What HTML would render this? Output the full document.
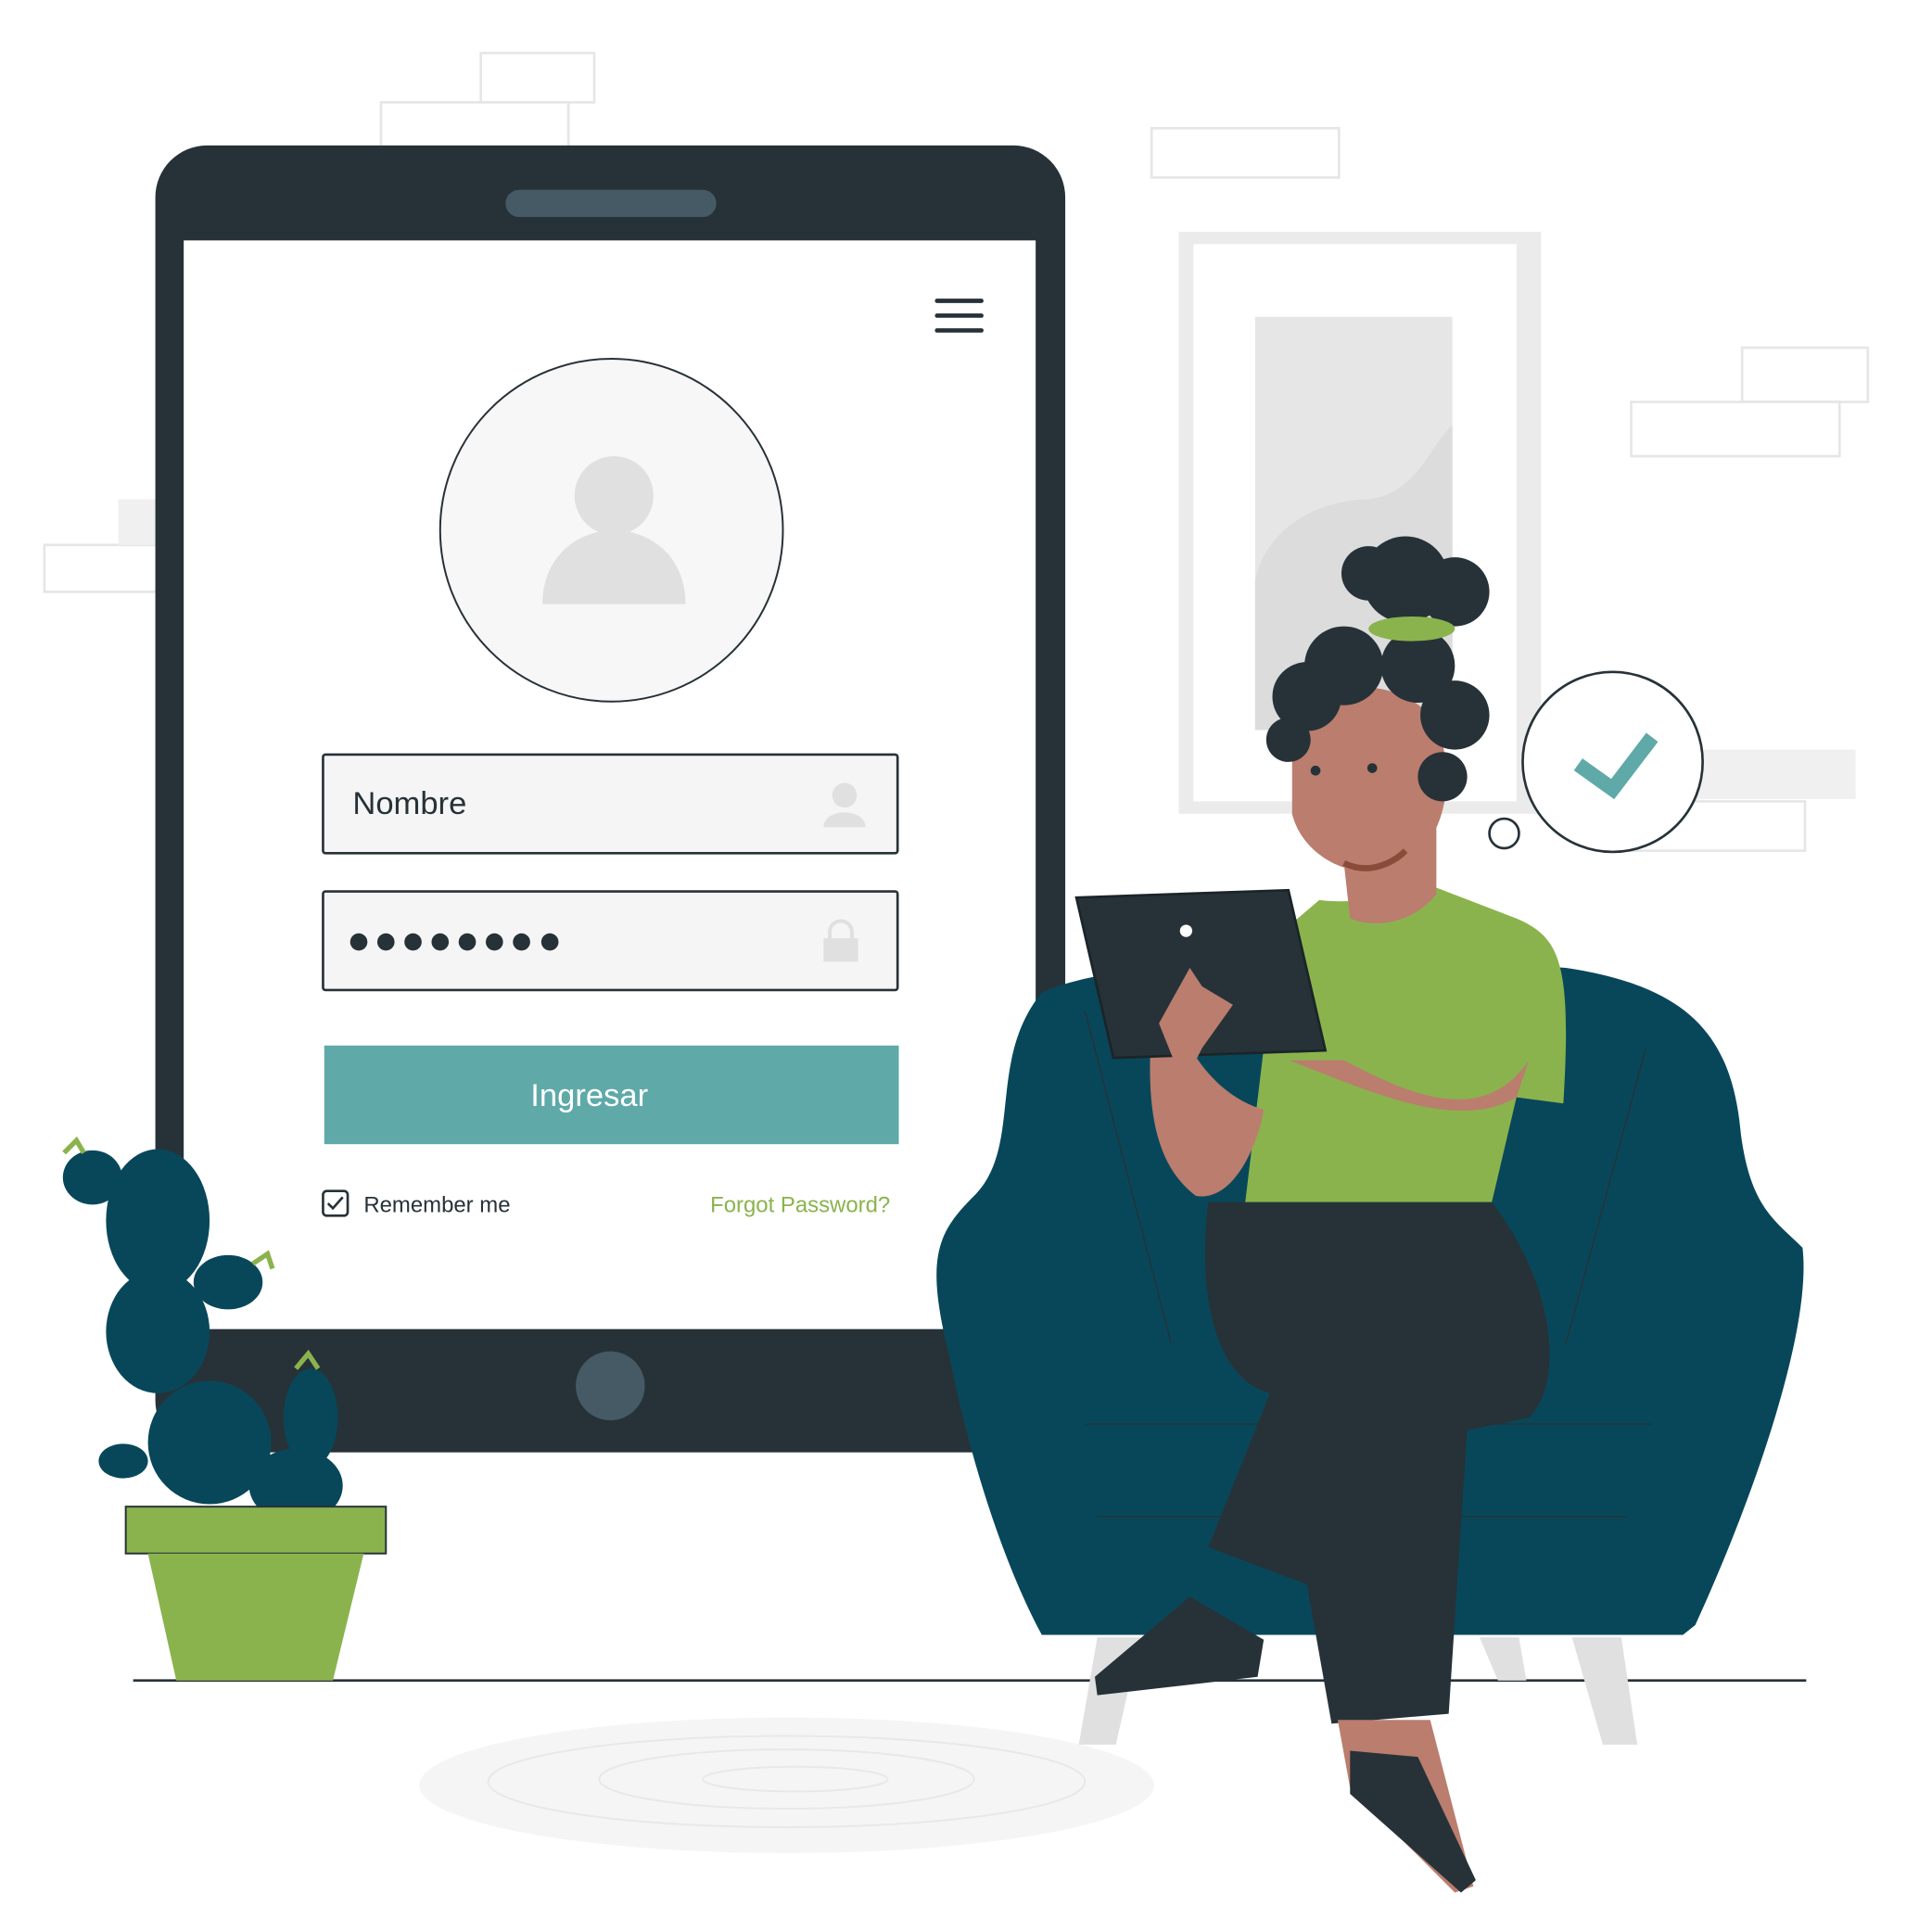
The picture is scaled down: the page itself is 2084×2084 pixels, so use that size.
<!DOCTYPE html>
<html><head><meta charset="utf-8"><style>
html,body{margin:0;padding:0;background:#fff;}
svg{display:block;}
text{font-family:"Liberation Sans",sans-serif;}
</style></head><body>
<svg width="2084" height="2084" viewBox="0 0 1567 1567" xmlns="http://www.w3.org/2000/svg">
<rect width="1567" height="1567" fill="#fff"/>
<g fill="#fff" stroke="#e6e6e6" stroke-width="2">
<rect x="390" y="43" width="92" height="40"/>
<rect x="309" y="83" width="152" height="40"/>
<rect x="934" y="104" width="152" height="40"/>
<rect x="1413" y="282" width="102" height="44"/>
<rect x="1323" y="326" width="169" height="44"/>
<rect x="36" y="442" width="95" height="38"/>
<rect x="1310" y="650" width="154" height="40"/>
</g>
<rect x="96" y="405" width="35" height="37" fill="#f0f0f0"/>
<rect x="1360" y="608" width="145" height="40" fill="#f0f0f0"/>
<rect x="956" y="188" width="294" height="472" fill="#ebebeb"/>
<rect x="968" y="198" width="262" height="452" fill="#fff"/>
<rect x="1018" y="257" width="160" height="335" fill="#e6e6e6"/>
<path d="M1018 470 C1030 420 1080 405 1110 405 C1150 400 1160 360 1178 345 L1178 592 L1018 592Z" fill="#dcdcdc"/>
<ellipse cx="638" cy="1448" rx="298" ry="55" fill="#f5f5f5"/>
<g fill="none" stroke="#e8e8e8" stroke-width="1.5">
<ellipse cx="638" cy="1445" rx="242" ry="37"/>
<ellipse cx="638" cy="1443" rx="152" ry="24"/>
<ellipse cx="645" cy="1443" rx="75" ry="10"/>
</g>
<line x1="108" y1="1363" x2="1465" y2="1363" stroke="#263238" stroke-width="2"/>
<rect x="126" y="118" width="738" height="1060" rx="42" fill="#263238"/>
<rect x="149" y="195" width="691" height="883" fill="#fff"/>
<rect x="410" y="154" width="171" height="22" rx="11" fill="#455a64"/>
<circle cx="495" cy="1124" r="28" fill="#455a64"/>
<g stroke="#263238" stroke-width="3.5" stroke-linecap="round">
<line x1="760" y1="244" x2="796" y2="244"/><line x1="760" y1="256" x2="796" y2="256"/><line x1="760" y1="268" x2="796" y2="268"/>
</g>
<circle cx="496" cy="430" r="139" fill="#f7f7f7" stroke="#263238" stroke-width="1.5"/>
<circle cx="498" cy="402" r="32" fill="#e0e0e0"/>
<path d="M440 490 C440 450 470 430 498 430 C526 430 556 450 556 490Z" fill="#e0e0e0"/>
<rect x="262" y="612" width="466" height="80" rx="2" fill="#f5f5f5" stroke="#263238" stroke-width="2"/>
<text x="286" y="660" font-size="26" fill="#263238">Nombre</text>
<circle cx="685" cy="645" r="10" fill="#e0e0e0"/>
<path d="M668 671 C668 655 702 655 702 671Z" fill="#e0e0e0"/>
<rect x="262" y="723" width="466" height="80" rx="2" fill="#f5f5f5" stroke="#263238" stroke-width="2"/>
<g fill="#263238">
<circle cx="291" cy="764" r="7"/><circle cx="313" cy="764" r="7"/><circle cx="335" cy="764" r="7"/><circle cx="357" cy="764" r="7"/><circle cx="379" cy="764" r="7"/><circle cx="401" cy="764" r="7"/><circle cx="423" cy="764" r="7"/><circle cx="446" cy="764" r="7"/>
</g>
<path d="M673 762 v-6 a9 9 0 0 1 18 0 v6" fill="none" stroke="#e0e0e0" stroke-width="3"/>
<rect x="668" y="761" width="28" height="19" fill="#e0e0e0"/>
<rect x="263" y="848" width="466" height="80" fill="#5fa9a9"/>
<text x="478" y="897" font-size="26" fill="#fff" text-anchor="middle">Ingresar</text>
<rect x="262" y="966" width="20" height="20" rx="3" fill="none" stroke="#263238" stroke-width="2"/>
<path d="M266 976 l4 4 l8 -9" fill="none" stroke="#263238" stroke-width="2"/>
<text x="295" y="983" font-size="18" fill="#263238">Remember me</text>
<text x="722" y="983" font-size="18" fill="#8ab34d" text-anchor="end">Forgot Password?</text>
<path d="M890 1328 L875 1415 L905 1415 L925 1328Z M1275 1328 L1300 1415 L1328 1415 L1315 1328Z M1200 1328 L1215 1363 L1238 1363 L1232 1328Z" fill="#e0e0e0"/>
<path d="M845 805 C900 780 1050 770 1270 785 C1370 800 1405 840 1412 920 C1420 980 1440 990 1462 1012 C1470 1080 1420 1220 1375 1318 L1365 1326 L845 1326 C820 1280 790 1200 770 1100 C750 1020 760 1000 790 970 C830 930 800 860 845 805Z" fill="#08475a"/>
<path d="M890 1230 L1320 1230 M880 1155 L1340 1155 M1270 1090 L1335 850 M950 1090 L880 820" stroke="#263238" stroke-width="1" fill="none"/>
<path d="M980 975 L1210 975 C1260 1040 1270 1120 1240 1150 L1190 1160 L1175 1390 L1080 1398 L1060 1285 L980 1255 L1030 1130 C990 1120 970 1060 980 975Z" fill="#263238"/>
<path d="M1070 730 C1110 735 1150 720 1165 720 L1230 745 C1265 760 1275 780 1268 895 L1230 890 L1210 975 L1010 975 L1025 850 L1000 790 Z" fill="#8ab34d"/>
<path d="M1045 860 C1100 880 1180 920 1230 890 L1240 860 C1200 920 1130 880 1090 860Z M935 820 C930 880 930 940 970 970 C1000 975 1020 930 1025 900 C990 890 970 860 960 840Z" fill="#ba7d6e"/>
<path d="M1090 700 L1095 745 C1120 755 1150 745 1165 725 L1165 660Z" fill="#ba7d6e"/>
<path d="M1048 590 C1060 560 1120 540 1160 580 C1185 620 1175 690 1130 705 C1090 715 1055 690 1048 660Z" fill="#ba7d6e"/>
<g fill="#263238">
<circle cx="1140" cy="470" r="35"/><circle cx="1180" cy="480" r="28"/><circle cx="1110" cy="465" r="22"/>
<circle cx="1090" cy="540" r="32"/><circle cx="1060" cy="565" r="28"/><circle cx="1150" cy="540" r="30"/><circle cx="1180" cy="580" r="28"/><circle cx="1170" cy="630" r="20"/><circle cx="1045" cy="600" r="18"/>
</g>
<ellipse cx="1145" cy="510" rx="35" ry="10" fill="#8ab34d"/>
<circle cx="1067" cy="625" r="4" fill="#263238"/><circle cx="1113" cy="623" r="4" fill="#263238"/>
<path d="M1090 700 C1110 710 1130 700 1140 690" stroke="#8a4b3a" stroke-width="5" fill="none"/>
<path d="M873 728 L1045 722 L1075 852 L903 858Z" fill="#263238" stroke="#1b2428" stroke-width="2"/>
<circle cx="962" cy="755" r="5" fill="#fff"/>
<path d="M940 830 L965 785 L975 800 L1000 815 L975 850 L960 880Z" fill="#ba7d6e"/>
<path d="M965 1295 L1025 1330 L1020 1360 L890 1375 L888 1360Z" fill="#263238"/>
<path d="M1085 1395 L1160 1395 L1195 1530 L1180 1535 L1095 1450Z" fill="#ba7d6e"/>
<path d="M1095 1420 L1150 1425 L1197 1525 L1185 1535 L1095 1455Z" fill="#263238"/>
<circle cx="1308" cy="618" r="73" fill="#fff" stroke="#263238" stroke-width="2"/>
<path d="M1280 620 L1308 640 L1340 598" fill="none" stroke="#5fa9a9" stroke-width="12"/>
<circle cx="1220" cy="676" r="12" fill="#fff" stroke="#263238" stroke-width="2"/>
<g fill="#08475a">
<ellipse cx="128" cy="990" rx="42" ry="58"/>
<ellipse cx="75" cy="955" rx="24" ry="22"/>
<ellipse cx="185" cy="1040" rx="28" ry="22"/>
<ellipse cx="128" cy="1080" rx="42" ry="50"/>
<ellipse cx="170" cy="1170" rx="50" ry="50"/>
<ellipse cx="252" cy="1150" rx="22" ry="40"/>
<ellipse cx="240" cy="1205" rx="38" ry="30"/>
<ellipse cx="100" cy="1185" rx="20" ry="14"/>
</g>
<path d="M52 935 l10 -10 l6 10 M205 1025 l12 -8 l4 12 M240 1110 l10 -12 l8 12" stroke="#8ab34d" stroke-width="4" fill="none"/>
<rect x="102" y="1222" width="211" height="38" fill="#8ab34d" stroke="#263238" stroke-width="1.5"/>
<path d="M120 1260 L295 1260 L270 1363 L143 1363Z" fill="#8ab34d"/>
</svg>
</body></html>
